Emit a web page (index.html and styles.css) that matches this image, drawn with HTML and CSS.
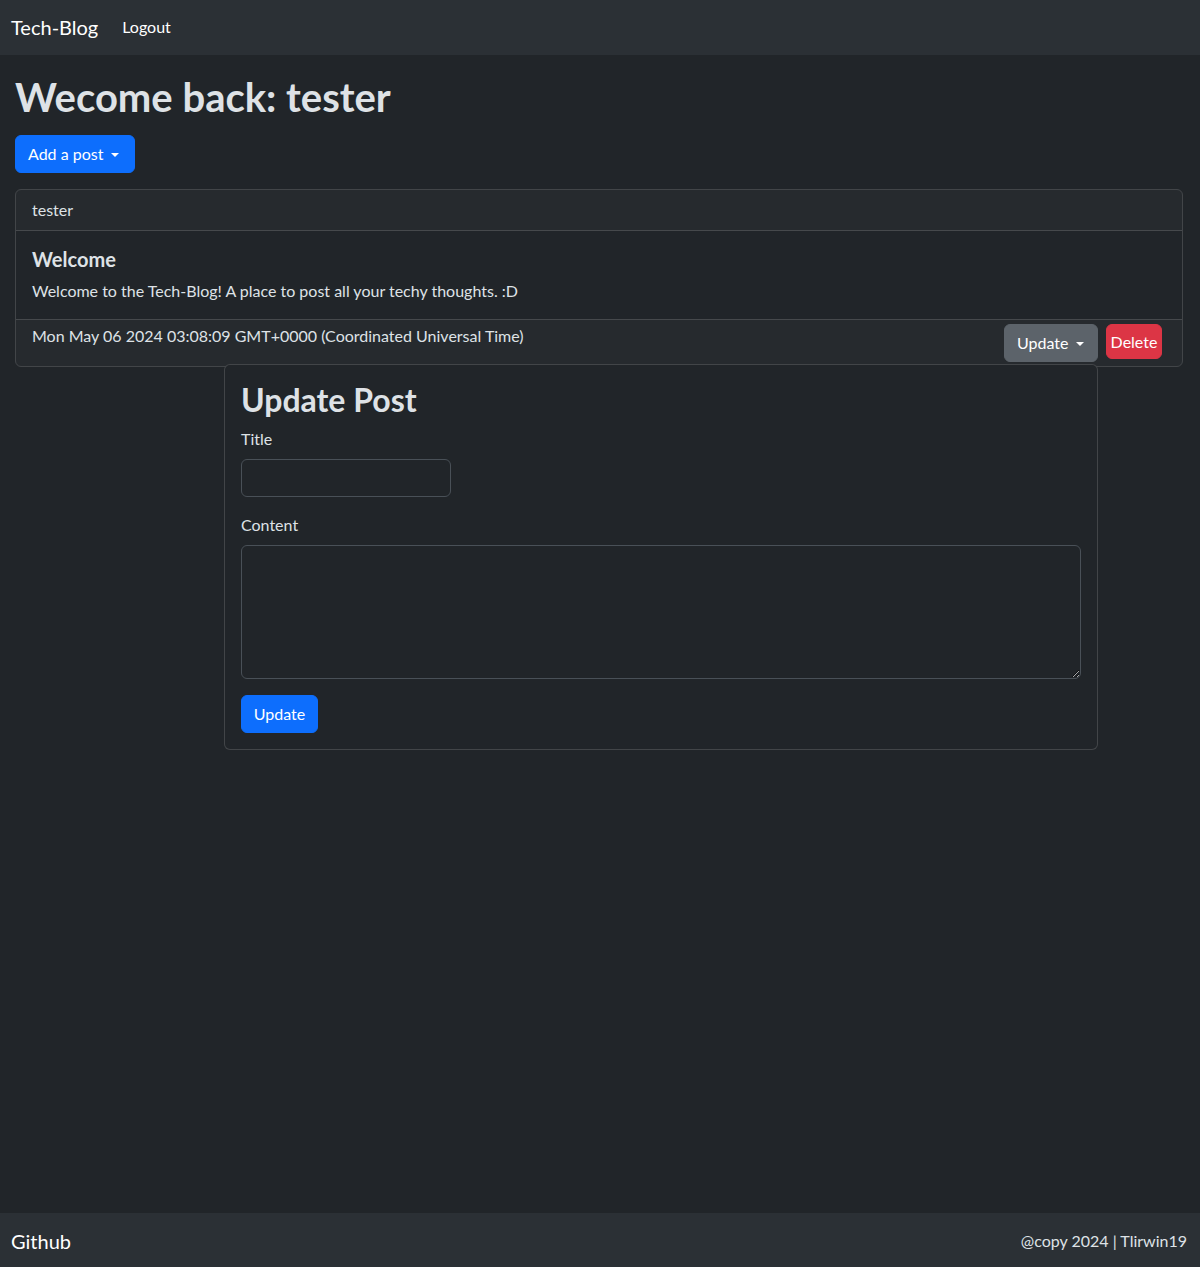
FILE: index.html
```html
<!DOCTYPE html>
<html lang="en">
<head>
<meta charset="utf-8">
<title>Tech-Blog</title>
<link rel="stylesheet" href="styles.css">
</head>
<body>
<nav class="navbar">
  <a class="brand" href="#">Tech-Blog</a>
  <a class="nav-link" href="#">Logout</a>
</nav>
<main class="main">
  <h1 class="welcome">Wecome back: tester</h1>
  <button class="btn btn-primary dropdown-toggle add-btn">Add a post</button>
  <div class="card">
    <div class="card-header">tester</div>
    <div class="card-body">
      <h5 class="card-title">Welcome</h5>
      <p class="card-text">Welcome to the Tech-Blog! A place to post all your techy thoughts. :D</p>
    </div>
    <div class="card-footer">
      <span class="date">Mon May 06 2024 03:08:09 GMT+0000 (Coordinated Universal Time)</span>
      <div class="actions">
        <div class="dropdown">
          <button class="btn btn-secondary dropdown-toggle update-btn">Update</button>
          <form class="dropdown-menu">
            <h2 class="form-title">Update Post</h2>
            <label class="form-label" for="title">Title</label>
            <input class="form-input" id="title" type="text">
            <label class="form-label" for="content">Content</label>
            <textarea class="form-textarea" id="content"></textarea>
            <button type="button" class="btn btn-primary submit-btn">Update</button>
          </form>
        </div>
        <button class="btn btn-danger btn-delete">Delete</button>
      </div>
    </div>
  </div>
</main>
<footer class="footer">
  <a class="footer-brand" href="#">Github</a>
  <span class="copy">@copy 2024 | Tlirwin19</span>
</footer>
</body>
</html>
```

FILE: styles.css
```css
* { box-sizing: border-box; }
html, body { height: 100%; }
body {
  margin: 0;
  min-height: 100vh;
  display: flex;
  flex-direction: column;
  background: #212529;
  color: #dee2e6;
  font-family: "Lato", "Noto Sans", sans-serif;
  font-size: 16px;
  line-height: 1.5;
}
a { text-decoration: none; }

.navbar {
  height: 55px;
  background: #2b3035;
  display: flex;
  align-items: center;
  padding: 0 11px 1px;
}
.brand {
  color: #fff;
  font-size: 20px;
  margin-right: 24px;
}
.nav-link {
  color: #fff;
  font-size: 16px;
}

.main {
  flex: 1;
  padding: 18px 17px 16px 15px;
}
.welcome {
  margin: 0 0 14px;
  font-size: 40px;
  font-weight: 700;
  line-height: 1.2;
  color: #dee2e6;
}

.btn {
  display: inline-block;
  font-family: inherit;
  font-size: 16px;
  line-height: 24px;
  height: 38px;
  padding: 6px 12px;
  border: 1px solid transparent;
  border-radius: 6px;
  color: #fff;
  cursor: pointer;
}
.btn-primary { background: #0d6efd; border-color: #0d6efd; }
.btn-secondary { background: #5c636a; border-color: #5c636a; }
.btn-danger { background: #dc3545; border-color: #dc3545; }
.dropdown-toggle::after {
  content: "";
  display: inline-block;
  margin-left: 8px;
  vertical-align: 3px;
  border-top: 4.8px solid #fff;
  border-right: 4px solid transparent;
  border-left: 4px solid transparent;
}
.add-btn {
  margin-bottom: 16px;
  width: 120px;
  padding: 6px 0 6px 12px;
  text-align: left;
}
.update-btn {
  width: 94px;
  padding: 6px 0 6px 12px;
  text-align: left;
}
.submit-btn { width: 77px; padding: 6px 0; text-align: center; }

.card {
  border: 1px solid rgba(255, 255, 255, 0.15);
  border-radius: 6px;
}
.card-header {
  padding: 8px 16px;
  background: rgba(222, 226, 230, 0.03);
  border-bottom: 1px solid rgba(255, 255, 255, 0.15);
  border-radius: 5px 5px 0 0;
}
.card-body { padding: 16px; }
.card-title {
  margin: 0 0 8px;
  font-size: 20px;
  font-weight: 700;
  line-height: 1.2;
}
.card-text { margin: 0; }
.card-footer {
  display: flex;
  justify-content: space-between;
  align-items: flex-start;
  padding: 4px 20px 4px 16px;
  background: rgba(222, 226, 230, 0.03);
  border-top: 1px solid rgba(255, 255, 255, 0.15);
  border-radius: 0 0 5px 5px;
}
.actions {
  display: flex;
  align-items: flex-start;
  gap: 8px;
}
.dropdown { position: relative; }
.btn-delete {
  width: 56px;
  padding: 4px 0;
  height: 35px;
  text-align: center;
}

.dropdown-menu {
  position: absolute;
  top: 40px;
  right: 0;
  width: 874px;
  z-index: 10;
  background: #212529;
  border: 1px solid rgba(255, 255, 255, 0.15);
  border-radius: 6px;
  padding: 16px;
  display: flex;
  flex-direction: column;
  align-items: flex-start;
}
.form-title {
  margin: 0 0 8px;
  font-size: 32px;
  font-weight: 700;
  line-height: 38px;
}
.form-label {
  margin-bottom: 8px;
  line-height: 24px;
}
.form-input {
  width: 210px;
  height: 38px;
  margin-bottom: 16px;
  background: #212529;
  border: 1px solid #495057;
  border-radius: 6px;
  color: #dee2e6;
  font-family: inherit;
  font-size: 16px;
  padding: 6px 12px;
}
.form-textarea {
  width: 840px;
  height: 134px;
  margin-bottom: 16px;
  background: #212529;
  border: 1px solid #495057;
  border-radius: 6px;
  color: #dee2e6;
  font-family: inherit;
  font-size: 16px;
  padding: 6px 12px;
}

.footer {
  height: 54px;
  background: #2b3035;
  display: flex;
  align-items: center;
  justify-content: space-between;
  padding: 2px 13px 0 11px;
}
.footer-brand {
  color: #fff;
  font-size: 20px;
}
.copy {
  color: #dee2e6;
  font-size: 16px;
}
```
